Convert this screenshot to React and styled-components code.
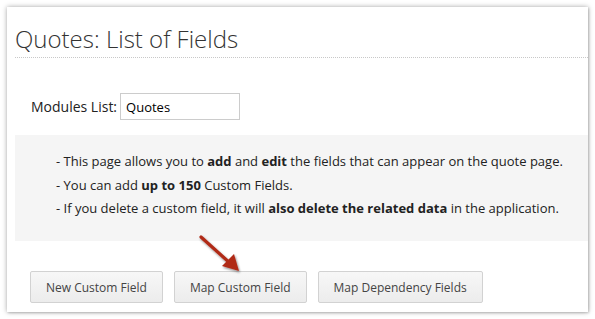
import React from 'react';
import styled, { createGlobalStyle } from 'styled-components';

const GlobalStyle = createGlobalStyle`
  html, body {
    margin: 0;
    padding: 0;
    background: #fff;
  }
  body {
    font-family: "Open Sans", "Liberation Sans", sans-serif;
  }
`;

const buttons = ['New Custom Field', 'Map Custom Field', 'Map Dependency Fields'];

const App = () => (
  <Page>
    <GlobalStyle />
    <Panel>
      <Header>
        <Title>Quotes: List of Fields</Title>
      </Header>
      <ModuleRow>
        <Label>Modules List:</Label>
        <ModuleInput readOnly value="Quotes" />
      </ModuleRow>
      <InfoBox>
        <InfoLine>- This page allows you to <b>add</b> and <b>edit</b> the fields that can appear on the quote page.</InfoLine>
        <InfoLine>- You can add <b>up to 150</b> Custom Fields.</InfoLine>
        <InfoLine>- If you delete a custom field, it will <b>also delete the related data</b> in the application.</InfoLine>
      </InfoBox>
      <ButtonRow>
        {buttons.map((label) => (
          <Button key={label}>{label}</Button>
        ))}
      </ButtonRow>
      <Arrow width="50" height="45" viewBox="0 0 50 45">
        <defs>
          <filter id="arrowShadow" x="-30%" y="-30%" width="160%" height="160%">
            <feDropShadow dx="1" dy="1.5" stdDeviation="1.2" floodColor="#000" floodOpacity="0.45" />
          </filter>
        </defs>
        <g filter="url(#arrowShadow)">
          <line x1="3" y1="2" x2="33" y2="29" stroke="#b02a18" strokeWidth="3.2" strokeLinecap="round" />
          <polygon points="41,36 24,31 36,19" fill="#b02a18" />
        </g>
      </Arrow>
    </Panel>
  </Page>
);

const Page = styled.div`
  padding: 7px;
  width: 595px;
  height: 319px;
  box-sizing: border-box;
`;

const Panel = styled.div`
  position: relative;
  width: 581px;
  height: 305px;
  background: #fff;
  box-shadow: 0 0 5px rgba(0, 0, 0, 0.35), 1px 1px 2px rgba(0, 0, 0, 0.15);
`;

const Header = styled.div`
  margin-left: 8px;
  height: 51px;
  box-sizing: border-box;
  border-bottom: 1px dotted #c8c8c8;
  display: flex;
  align-items: flex-end;
  padding-bottom: 6px;
`;

const Title = styled.h1`
  margin: 0;
  font-size: 24px;
  font-weight: 300;
  color: #333;
  line-height: 1;
`;

const ModuleRow = styled.div`
  display: flex;
  align-items: center;
  gap: 3px;
  padding: 35px 0 0 24px;
`;

const Label = styled.span`
  font-size: 14px;
  color: #222;
`;

const ModuleInput = styled.input`
  width: 120px;
  height: 27px;
  box-sizing: border-box;
  border: 1px solid #ccc;
  padding: 0 5px;
  font-family: "Open Sans", sans-serif;
  font-size: 13px;
  font-weight: 500;
  color: #000;
  outline: none;
`;

const InfoBox = styled.div`
  margin: 15px 0 0 8px;
  height: 106px;
  box-sizing: border-box;
  background: #f5f5f5;
  padding: 15px 0 0 41px;
`;

const InfoLine = styled.div`
  font-size: 13px;
  line-height: 23.5px;
  color: #222;

  b {
    font-weight: 700;
  }
`;

const ButtonRow = styled.div`
  display: flex;
  gap: 11px;
  padding: 30px 0 0 23px;
`;

const Button = styled.button`
  height: 32px;
  padding: 0 15px;
  border: 1px solid #d2d2d2;
  border-radius: 2px;
  background: linear-gradient(#f7f7f7, #ececec);
  font-family: "Open Sans", sans-serif;
  font-size: 12px;
  color: #444;
`;

const Arrow = styled.svg`
  position: absolute;
  left: 191px;
  top: 228px;
  overflow: visible;
`;

export default App;
